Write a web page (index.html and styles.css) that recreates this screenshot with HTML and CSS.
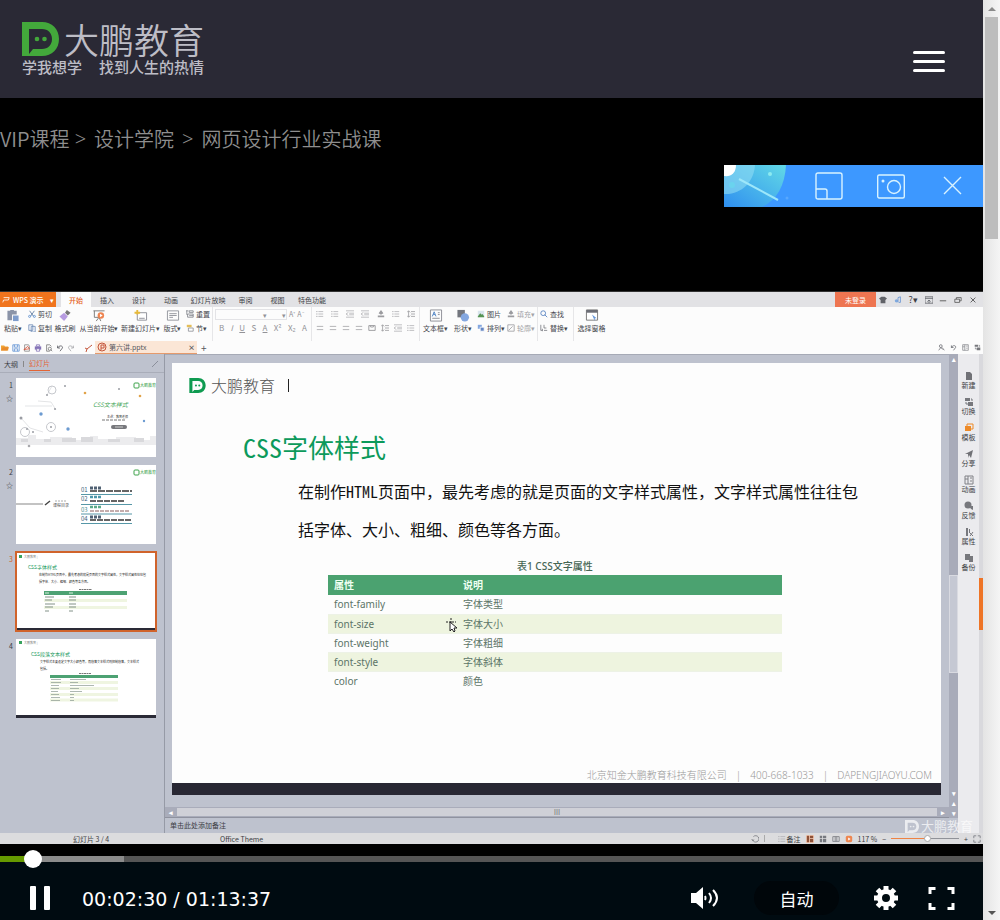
FILE: index.html
```html
<!DOCTYPE html>
<html lang="zh-CN">
<head>
<meta charset="utf-8">
<meta name="viewport" content="width=device-width, initial-scale=1">
<title>大鹏教育 - 网页设计行业实战课</title>
<link rel="stylesheet" href="styles.css">
</head>
<body>
<svg class="defs" aria-hidden="true">
  <symbol id="brand" viewBox="0 0 37 34"><path fill="currentColor" fill-rule="evenodd" d="M0 0H20C30 0 37 7 37 17S30 34 20 34H0ZM7 7V32L11 27H20C26 27 30 23 30 17S26 7 20 7Z"/><circle cx="15" cy="17" r="2.3" fill="currentColor"/><circle cx="22.500" cy="17" r="2.300" fill="currentColor"/></symbol>
  <symbol id="paste" viewBox="0 0 14 14"><path fill="#8b94a8" d="M1 2h3V1h4v1h3v4H6v6H1z"/><path fill="#7e9ccc" d="M7 7h6v6H7z"/></symbol>
  <symbol id="cut" viewBox="0 0 10 10"><path d="M2 1 7 8M8 1 3 8" stroke="#56749c" fill="none"/><circle cx="2" cy="8" r="1.300" fill="none" stroke="#5a8ed0"/><circle cx="8" cy="8" r="1.300" fill="none" stroke="#5a8ed0"/></symbol>
  <symbol id="copy" viewBox="0 0 10 10"><path d="M1 1h5v7H1zM4 3h5v7H4z" fill="#f5f8fd" stroke="#6d8ab5"/></symbol>
  <symbol id="brush" viewBox="0 0 14 14"><path d="m9 1 4 3-3 3-3-3z" fill="#777"/><path d="M6 4 10 8 6 13 1 8z" fill="#b79be0"/></symbol>
  <symbol id="play" viewBox="0 0 14 14"><path d="M1 2h12M2 2v7h5M7 9l-3 4M7 9l2 4" stroke="#777" fill="none"/><circle cx="9" cy="7" r="3.500" fill="#ee8450"/><path d="m8 5 3 2-3 2z" fill="#fff"/></symbol>
  <symbol id="newslide" viewBox="0 0 14 14"><path d="M3 4h10v8H3zM5 10h6" stroke="#8b8e96" fill="#fff"/><path d="M3 1v5M0 4h6" stroke="#e6b93b" stroke-width="2"/></symbol>
  <symbol id="layout" viewBox="0 0 14 14"><path d="M1 2h12v10H1zM3 5h8M3 7h8M3 9h4" stroke="#92959c" fill="none"/></symbol>
  <symbol id="reset" viewBox="0 0 10 10"><path d="M0 1h3M1 1v5M4 1h5v2H4zM2 5h7v4H2zM4 7h5" stroke="#7c7f86" fill="none"/></symbol>
  <symbol id="section" viewBox="0 0 10 10"><path d="M1 1h6v3H1z" fill="#e4be58"/><path d="M3 5h6v4H3z" stroke="#8a8d94" fill="#fff"/></symbol>
  <symbol id="lines" viewBox="0 0 10 10"><path d="M1 3h8M1 7h8" stroke="#a3a3a7" fill="none"/></symbol>
  <symbol id="bullets" viewBox="0 0 10 10"><path d="M0 2h2M0 5h2M0 8h2M3 2h6M3 5h6M3 8h6" stroke="#b1b1b5" fill="none"/></symbol>
  <symbol id="indent" viewBox="0 0 10 10"><path d="M0 1h10M4 4h6M4 6h6M0 9h10M3 3 0 5l3 2" stroke="#b1b1b5" fill="none"/></symbol>
  <symbol id="spacing" viewBox="0 0 10 10"><path d="M2 1v8M0 3l2-2 2 2M0 7l2 2 2-2M5 2h5M5 5h5M5 8h5" stroke="#9a9a9e" fill="none"/></symbol>
  <symbol id="columns" viewBox="0 0 10 10"><path d="M1 2h8v6H1zM5 2v3M3 2v2M7 2v2" stroke="#8d8d91" fill="none"/></symbol>
  <symbol id="textbox" viewBox="0 0 14 14"><path d="M1 1h12v12H1zM9 4h2M9 6h2M3 10h8" stroke="#8a8d94" fill="none"/><path d="m3 8 2-5 2 5M4 6h2" stroke="#4e83c4" fill="none"/></symbol>
  <symbol id="shapes" viewBox="0 0 14 14"><path d="M1 1h8v8H1z" fill="#73767e"/><circle cx="9" cy="9" r="4.500" fill="#84a7e0"/></symbol>
  <symbol id="picture" viewBox="0 0 10 10"><path d="M1 1h8v8H1z" fill="#d9e5ed"/><path d="m1 8 3-4 2 2 1-1 2 3v1H1z" fill="#569454"/></symbol>
  <symbol id="arrange" viewBox="0 0 10 10"><path d="M1 1h5v5H1z" fill="#84a7e0"/><path d="M4 4h5v5H4z" fill="#6586c3" stroke="#fff"/></symbol>
  <symbol id="fill" viewBox="0 0 10 10"><path d="m5 0 3 4-3 2-3-2zM1 7h8v2H1z" fill="#9b9b9f"/></symbol>
  <symbol id="outline" viewBox="0 0 10 10"><path d="M1 1h8v8H1zM2 8l5-5" stroke="#9b9b9f" fill="none"/></symbol>
  <symbol id="find" viewBox="0 0 10 10"><circle cx="4" cy="4" r="3" fill="none" stroke="#4979bd"/><path d="m6 6 3 3" stroke="#4979bd"/></symbol>
  <symbol id="person" viewBox="0 0 10 10"><circle cx="4" cy="3" r="2" fill="none" stroke="#606268"/><path d="m1 9 3-4 3 3M6 5l3 4" stroke="#606268" fill="none"/></symbol>
  <symbol id="replace" viewBox="0 0 10 10"><path d="M1 1v7h2M5 1v4h3M5 8h4M3 6v3" stroke="#77797f" fill="none"/></symbol>
  <symbol id="pane" viewBox="0 0 14 14"><path d="M1 1h12v11H1z" stroke="#777" fill="#fff"/><path d="M1 1h12v3H1z" fill="#6c6e76"/><path d="m7 6 5 4-2 0 0 3z" fill="#6496da"/></symbol>
  <symbol id="folder" viewBox="0 0 10 10"><path d="M0 2h4l1 1h4v5H0z" fill="#efa233"/><path d="m2 4h8l-2 4H0z" fill="#e88a2b"/></symbol>
  <symbol id="save" viewBox="0 0 10 10"><path d="M1 1h8v8H1zM3 1v3h4V1M3 9V6h4v3" stroke="#5f92d4" fill="none"/></symbol>
  <symbol id="pdf" viewBox="0 0 10 10"><path d="M2 9V1h5l1 2v6z" stroke="#888" fill="none"/><path d="m1 7 5-4 2 3z" stroke="#d65339" fill="none"/></symbol>
  <symbol id="print" viewBox="0 0 10 10"><path d="M1 3h8v4H1z" fill="#8473b7"/><path d="M3 1h4v2H3zM3 6h4v3H3z" stroke="#8473b7" fill="#fff"/></symbol>
  <symbol id="preview" viewBox="0 0 10 10"><path d="M6 9H2V1h4l2 2" stroke="#777" fill="none"/><circle cx="6" cy="6" r="2" stroke="#777" fill="none"/><path d="m7 7 2 2" stroke="#777"/></symbol>
  <symbol id="undo" viewBox="0 0 10 10"><path d="M2 2v3h3M2 5c2-4 7-3 6 0L5 9" stroke="#55575e" fill="none"/></symbol>
  <symbol id="redo" viewBox="0 0 10 10"><path d="M8 2v3H5M8 5C6 1 1 2 2 5l3 4" stroke="#a6a7ab" fill="none"/></symbol>
  <symbol id="doc" viewBox="0 0 10 10"><path d="M2 1h4l2 2v6H2z" fill="#707176"/></symbol>
  <symbol id="switch" viewBox="0 0 10 10"><path d="M1 1h5v3H1zM4 5h5v4H4z" fill="#77787d"/><path d="M2 5v2h2M7 2h1v2" stroke="#77787d" fill="none"/></symbol>
  <symbol id="template" viewBox="0 0 10 10"><path d="M3 1h6v5H3z" fill="none" stroke="#ee8a27"/><path d="M1 3h6v5H1z" fill="#ee8a27"/></symbol>
  <symbol id="share" viewBox="0 0 10 10"><path d="m9 1-2 8-2-3-1 3V5L1 5z" fill="#707176"/></symbol>
  <symbol id="anim" viewBox="0 0 10 10"><path d="M1 1h8v8H1zM1 4h3M4 1v8M6 3h2M6 6h2" stroke="#808186" fill="none"/></symbol>
  <symbol id="chat" viewBox="0 0 10 10"><circle cx="4" cy="4" r="3.500" fill="#77787d"/><path d="M5 5h4v4L7 8z" fill="#77787d"/></symbol>
  <symbol id="props" viewBox="0 0 10 10"><path d="M2 1h2v8H2zM5 2h1v4H5z" fill="#77787d"/><path d="m5 5 4 4M9 5 6 9" stroke="#77787d"/></symbol>
  <symbol id="backup" viewBox="0 0 10 10"><path d="M1 1h5v6H1zM6 3h3v6H5V8z" fill="#77787d"/></symbol>
</svg>

<div class="page">
  <div class="content">
    <header class="site-header">
      <a class="brand" href="#">
        <span class="brand-row"><svg class="brand-mark"><use href="#brand"/></svg><span class="brand-name">大鹏教育</span></span>
        <span class="brand-slogan"><span>学我想学</span><span>找到人生的热情</span></span>
      </a>
      <button class="menu" aria-label="菜单"><span></span><span></span><span></span></button>
    </header>

    <nav class="crumbs" aria-label="面包屑"><span class="crumb-first"><a href="#">VIP课程</a>&gt;</span><a href="#">设计学院</a><span>&gt;</span><a href="#">网页设计行业实战课</a></nav>

    <div class="recorder">
      <svg class="recorder-art" viewBox="0 0 66 42">
        <defs><linearGradient id="fan" x1="0" y1="1" x2="1" y2="0"><stop offset="0" stop-color="#2f8ff0"/><stop offset="1" stop-color="#62d9e6"/></linearGradient></defs>
        <path d="M0 0H62C61 20 53 35 38 42H0Z" fill="url(#fan)"/><path d="M0 0H31C30 17 17 30 0 29Z" fill="#8fdcf3" opacity=".6"/>
        <path d="M0 0H12C12 8 7 12 0 11Z" fill="#fff"/><path d="m15 14 39 21" stroke="#9de7fa" stroke-width="2"/><circle cx="8" cy="20" r="3" fill="#6ad3ee"/><circle cx="46" cy="9" r="2" fill="#8ceaf0"/><circle cx="63" cy="33" r="1.500" fill="#58a8ff"/>
      </svg>
      <button aria-label="窗口"><svg viewBox="0 0 28 28"><path d="M3 1H25Q27 1 27 3V25Q27 27 25 27H3Q1 27 1 25V3Q1 1 3 1ZM1 17H10Q12 17 12 19V27"/></svg></button>
      <button aria-label="截图"><svg viewBox="0 0 28 28"><rect x="0.700" y="3" width="26.600" height="23" rx="1.500"/><circle cx="17" cy="15" r="6.500"/><circle class="dot" cx="6" cy="9" r="1.500"/></svg></button>
      <button aria-label="关闭"><svg viewBox="0 0 28 28"><path d="m6 5 17 17M23 5 6 22"/></svg></button>
    </div>

    <section class="wps" aria-label="课程视频">
      <div class="titlebar">
        <button class="app"><svg viewBox="0 0 10 10"><path d="M2 2h7L8 5H2L1 8" stroke="#fff" fill="none"/></svg>WPS 演示<i>▾</i></button>
        <div class="tabs"><button class="active">开始</button><button>插入</button><button>设计</button><button>动画</button><button>幻灯片放映</button><button>审阅</button><button>视图</button><button>特色功能</button></div>
        <button class="login">未登录</button>
        <div class="winbtns">
          <svg viewBox="0 0 10 10"><path d="m0 3 3-2h4l3 2-2 2v4H2V5z" fill="#606268"/></svg>
          <svg viewBox="0 0 10 10"><circle cx="3" cy="6" r="2" fill="#7ea9df"/><path d="M5 8V2l3-1v7H6" stroke="#5f8fd0" fill="none"/></svg>
          <span class="help">?▾</span>
          <svg viewBox="0 0 10 10"><path d="M0 1h10v8H0zM0 3h10M5 9V5M3 7l2-2 2 2" stroke="#606268" fill="none"/></svg>
          <svg viewBox="0 0 10 10"><path d="M1 6h8" stroke="#444"/></svg>
          <svg viewBox="0 0 10 10"><path d="M1 4h6v4H1zM3 4V2h6v4H7" stroke="#555" fill="none"/></svg>
          <svg viewBox="0 0 10 10"><path d="m2 2 6 6M8 2 2 8" stroke="#444"/></svg>
        </div>
      </div>

      <div class="ribbon">
        <div class="big"><svg><use href="#paste"/></svg><span>粘贴▾</span></div>
        <div class="stack"><span><svg><use href="#cut"/></svg>剪切</span><span><svg><use href="#copy"/></svg>复制</span></div>
        <div class="big"><svg><use href="#brush"/></svg><span>格式刷</span></div>
        <div class="big"><svg><use href="#play"/></svg><span>从当前开始▾</span></div>
        <div class="big"><svg><use href="#newslide"/></svg><span>新建幻灯片▾</span></div>
        <div class="big"><svg><use href="#layout"/></svg><span>版式▾</span></div>
        <div class="stack"><span><svg><use href="#reset"/></svg>重置</span><span><svg><use href="#section"/></svg>节▾</span></div>
        <div class="stack ruled font-tools">
          <span><span class="fontbox"><i>▾</i><i>▾</i></span><b>A⁺</b><b>A⁻</b></span>
          <span class="letters"><b>B</b><em>I</em><u>U</u><b>S</b><u>A</u><b>X²</b><b>X₂</b><b>A</b></span>
        </div>
        <div class="stack ruled para-tools">
          <span><svg><use href="#bullets"/></svg><svg><use href="#bullets"/></svg><svg><use href="#indent"/></svg><svg><use href="#indent"/></svg><svg><use href="#fill"/></svg><svg><use href="#bullets"/></svg><svg><use href="#spacing"/></svg></span>
          <span><svg><use href="#lines"/></svg><svg><use href="#lines"/></svg><svg><use href="#lines"/></svg><svg><use href="#lines"/></svg><svg><use href="#columns"/></svg><svg><use href="#spacing"/></svg><svg><use href="#indent"/></svg><svg><use href="#bullets"/></svg></span>
        </div>
        <div class="big ruled"><svg><use href="#textbox"/></svg><span>文本框▾</span></div>
        <div class="big"><svg><use href="#shapes"/></svg><span>形状▾</span></div>
        <div class="stack"><span><svg><use href="#picture"/></svg>图片</span><span><svg><use href="#arrange"/></svg>排列▾</span></div>
        <div class="stack muted"><span><svg><use href="#fill"/></svg>填充▾</span><span><svg><use href="#outline"/></svg>轮廓▾</span></div>
        <div class="stack ruled"><span><svg><use href="#find"/></svg>查找</span><span><svg><use href="#replace"/></svg>替换▾</span></div>
        <div class="big ruled"><svg><use href="#pane"/></svg><span>选择窗格</span></div>
      </div>

      <div class="quickbar">
        <div class="quick"><svg><use href="#folder"/></svg><svg><use href="#save"/></svg><svg><use href="#pdf"/></svg><svg><use href="#print"/></svg><svg><use href="#preview"/></svg><svg><use href="#undo"/></svg><svg><use href="#redo"/></svg></div>
        <svg class="pin" viewBox="0 0 10 10"><path d="m2 5 2 1 5-4M3 9l1-3" stroke="#c4553a" fill="none"/></svg>
        <div class="filetab"><svg viewBox="0 0 10 10"><circle cx="5" cy="5" r="4" fill="none" stroke="#c4553a"/><path d="M4 8V3h3v3H4" fill="none" stroke="#c4553a"/></svg><span>第六讲.pptx</span><b>×</b></div>
        <span class="plus">+</span>
        <div class="tools"><svg><use href="#person"/></svg><svg><use href="#undo"/></svg><svg><use href="#anim"/></svg><svg><use href="#switch"/></svg></div>
      </div>

      <div class="workspace">
        <aside class="outline">
          <div class="outline-tabs"><span>大纲</span><i></i><span class="on">幻灯片</span><svg viewBox="0 0 8 8"><path d="m1 7 6-6" stroke="#8b8f9b"/></svg></div>
          <ol class="thumbs">
            <li><span class="num">1<small>☆</small></span>
              <svg viewBox="0 0 140 79"><rect width="140" height="79" fill="#fff"/>
                <g class="mini-brand"><rect x="118" y="5" width="5" height="5" rx="1" fill="none" stroke="#3da24b"/><text x="124" y="9">大鹏教育</text></g>
                <g fill="none" stroke="#c6c8cd"><path d="M9 28 36 28M22 23 35 24 40 32M5 40 14 50 27 54M31 17 36 8" stroke-width=".500"/><circle cx="36" cy="12" r="4"/><circle cx="35" cy="49" r="4.500"/><circle cx="9" cy="54" r="4.500"/></g>
                <g fill="#9a9ca3"><circle cx="31" cy="17" r="1"/><circle cx="49" cy="8" r="1"/><circle cx="39" cy="31" r="1"/><circle cx="5" cy="40" r="1.500"/><circle cx="11" cy="51" r="1"/><circle cx="17" cy="54" r="1"/><circle cx="35" cy="49" r="1"/><circle cx="103" cy="11" r="1"/></g>
                <g fill="#6c9bd1"><circle cx="25" cy="36" r="1.700"/><circle cx="52" cy="51" r="1.700"/><circle cx="128" cy="43" r="1.200"/></g><g fill="#e1a34a"><circle cx="69" cy="15" r="1.300"/><circle cx="124" cy="18" r="1.300"/></g>
                <path d="M0 60h12v-3h8v4h14v-2h22v3h18v-4h8v3h18v-2h20v3h14v-4h6v9H0z" fill="#ececee"/><path d="M5 61h7v3H5zM28 61h7v3h-7zM46 60h14v4H46zM65 59h12v5H65zM92 61h12v3H92zM118 60h10v4h-10z" fill="#d9d9dc"/><circle cx="13" cy="68" r="1.300" fill="#a9a9ad"/>
                <text x="77" y="29" font-size="6" fill="#47a658" font-style="italic">CSS文本样式</text><text x="91" y="40" font-size="3" fill="#333">主讲：教育老师</text><path d="M86 42h24" stroke="#777" stroke-dasharray="3 1"/>
                <rect x="95" y="47" width="16" height="4" rx="2" fill="#77787c"/><path d="M99 49h8" stroke="#ccc"/>
              </svg></li>
            <li><span class="num">2<small>☆</small></span>
              <svg viewBox="0 0 140 79"><rect width="140" height="79" fill="#fff"/>
                <g class="mini-brand"><rect x="118" y="5" width="5" height="5" rx="1" fill="none" stroke="#3da24b"/><text x="124" y="9">大鹏教育</text></g>
                <path d="M0 39h27" stroke="#555" stroke-width=".700"/><path d="m29 40 5-4" stroke="#444" stroke-width="1.500"/><path d="M39 36h12" stroke="#aaa" stroke-dasharray="2 1"/><text x="37" y="42" font-size="4" fill="#555">课程目录</text>
                <g font-size="6" fill="#395b79"><text x="65" y="27">01</text><text x="65" y="36">02</text><text x="65" y="47" fill="#448a8e">03</text><text x="65" y="56">04</text></g>
                <g stroke="#506173"><path d="M74 23h12" stroke-width="3" stroke-dasharray="3 1"/><path d="M74 26h42" stroke="#333" stroke-width="1.500" stroke-dasharray="7 1"/><path d="M74 32h12" stroke="#4e98ab" stroke-width="2.500" stroke-dasharray="3 1"/><path d="M74 36h34" stroke="#333" stroke-width="1.500" stroke-dasharray="6 1"/><path d="M74 42h12" stroke="#5bab89" stroke-width="2.500" stroke-dasharray="3 1"/><path d="M74 46h39" stroke="#8a5d5d" stroke-dasharray="4 1"/><path d="M74 52h12" stroke-width="3" stroke-dasharray="3 1"/><path d="M74 55h42" stroke="#333" stroke-width="1.500" stroke-dasharray="6 1"/></g>
                <path d="M65 29.500h51M65 39.500h51M65 49h51M65 58.500h51" stroke="#438b9d" stroke-width=".900"/>
              </svg></li>
            <li class="current"><span class="num">3</span>
              <svg viewBox="0 0 140 79"><rect width="140" height="79" fill="#fff"/><rect y="76" width="140" height="3" fill="#2a2a36"/>
                <rect x="3" y="3" width="3" height="3" fill="#37a25d"/><text x="8" y="6" font-size="3" fill="#888">大鹏教育 |</text><text x="12" y="17" font-size="5" fill="#16985b">CSS字体样式</text>
                <g font-size="3" fill="#222"><text x="23" y="24">在制作HTML页面中，最先考虑的就是页面的文字样式属性，文字样式属性往往包</text><text x="23" y="31">括字体、大小、粗细、颜色等各方面。</text></g>
                <path d="M63 37.500h13" stroke="#777" stroke-dasharray="2 .500"/><rect x="28" y="39" width="83" height="4" fill="#4da273"/><path d="M28 48.500h83M28 55.500h83" stroke="#eff5e1" stroke-width="3"/><path d="M29 45h9M29 48h7M29 52h10M29 55h8M29 59h4M53 45h7M53 48h7M53 52h7M53 55h7M53 59h4" stroke="#839289"/><path d="M29 41h4M53 41h4" stroke="#d8eedf"/>
              </svg></li>
            <li><span class="num">4</span>
              <svg viewBox="0 0 140 79"><rect width="140" height="79" fill="#fff"/><rect y="76" width="140" height="3" fill="#2a2a36"/>
                <rect x="3" y="2" width="3" height="3" fill="#37a25d"/><text x="8" y="5" font-size="3" fill="#888">大鹏教育 |</text><text x="15" y="17" font-size="5" fill="#16985b">CSS段落文本样式</text>
                <g font-size="3" fill="#222"><text x="24" y="24">文字样式主要设定文字大小颜色等，而段落文本样式则控制段落，文本样式</text><text x="24" y="31">包括。</text></g>
                <path d="M63 34.500h12" stroke="#777" stroke-dasharray="2 .500"/><rect x="34" y="36" width="68" height="3" fill="#4da273"/><path d="M34 43.500h68M34 49.500h68M34 55.500h68M34 61h68" stroke="#eff5e1" stroke-width="3"/><path d="M35 40.500h10M35 43.500h10M35 46.500h8M35 49.500h8M35 52.500h7M35 55.500h8M35 58.500h9M35 61.500h9M54 40.500h16M54 43.500h8M54 46.500h24M54 49.500h9M54 52.500h12M54 55.500h4M54 58.500h4M54 61.500h4" stroke="#8b9991" stroke-width=".700"/>
              </svg></li>
          </ol>
        </aside>

        <div class="center">
          <div class="view">
            <div class="stage-col">
              <div class="stage">
                <article class="slide">
                  <div class="slide-brand"><svg><use href="#brand"/></svg><span>大鹏教育</span><i></i></div>
                  <h1><span class="latin">CSS</span>字体样式</h1>
                  <p>在制作<span class="latin">HTML</span>页面中，最先考虑的就是页面的文字样式属性，文字样式属性往往包<br>括字体、大小、粗细、颜色等各方面。</p>
                  <table>
                    <caption>表1 CSS文字属性</caption>
                    <thead><tr><th scope="col">属性</th><th scope="col">说明</th></tr></thead>
                    <tbody>
                      <tr><td>font-family</td><td>字体类型</td></tr>
                      <tr><td>font-size</td><td><svg class="pointer" viewBox="0 0 12 16"><path d="M5 1v10M0 5h10" stroke="#222" stroke-dasharray="2 1"/><path d="M4 5v9l2-2 2 3 1-1-1-3h3z" fill="#fff" stroke="#222"/></svg>字体大小</td></tr>
                      <tr><td>font-weight</td><td>字体粗细</td></tr>
                      <tr><td>font-style</td><td>字体斜体</td></tr>
                      <tr><td>color</td><td>颜色</td></tr>
                    </tbody>
                  </table>
                  <footer><span>北京知金大鹏教育科技有限公司</span><span>|</span><span>400-668-1033</span><span>|</span><span>DAPENGJIAOYU.COM</span></footer>
                </article>
              </div>
              <div class="hscroll"><b>◂</b><span>Ⅲ</span><b>▸</b></div>
            </div>
            <div class="vscroll"><b>▴</b><span></span><b>▾</b><b>▴</b><b>▾</b></div>
          </div>
          <div class="notes">单击此处添加备注</div>
        </div>

        <div class="taskpane">
          <button><svg><use href="#doc"/></svg>新建</button><button><svg><use href="#switch"/></svg>切换</button><button><svg><use href="#template"/></svg>模板</button><button><svg><use href="#share"/></svg>分享</button><button><svg><use href="#anim"/></svg>动画</button><button><svg><use href="#chat"/></svg>反馈</button><button><svg><use href="#props"/></svg>属性</button><button><svg><use href="#backup"/></svg>备份</button>
        </div>
        <div class="edge"><span></span></div>
      </div>

      <div class="status">
        <span class="page-no">幻灯片 3 / 4</span><span class="theme">Office Theme</span>
        <svg viewBox="0 0 10 10"><path d="M3 2a4 4 0 1 1-1 4M1 5l1 2 2-1" stroke="#77797f" fill="none"/></svg><i></i>
        <span class="note-btn"><svg><use href="#bullets"/></svg>备注</span>
        <svg class="lit" viewBox="0 0 10 10"><path d="M1 1h3v8H1zM5 1h4v3H5zM5 5h4v4H5z" fill="#8d5037"/></svg>
        <svg viewBox="0 0 10 10"><path d="M1 1h3v3H1zM5 1h4v3H5zM1 5h3v4H1zM5 5h4v4H5z" fill="#77797f"/></svg>
        <svg viewBox="0 0 10 10"><path d="M1 2h8v6H1zM4 2v6M6 2v6" stroke="#77797f" fill="none"/></svg>
        <svg viewBox="0 0 10 10"><rect x="1" y="1" width="8" height="8" rx="2" fill="#ee8650"/><path d="m4 3 3 2-3 2z" fill="#fff"/></svg>
        <span class="zoom">117 %</span><span>−</span><span class="slider"><b></b></span><span>+</span>
        <svg viewBox="0 0 10 10"><path d="M1 4V1h3M6 1h3v3M9 6v3H6M4 9H1V6" stroke="#77797f" fill="none"/></svg>
      </div>
      <div class="watermark"><svg><use href="#brand"/></svg>大鹏教育</div>
    </section>

    <section class="player" aria-label="播放控制">
      <input class="progress" type="range" min="0" max="983" value="24" aria-label="播放进度">
      <div class="controls">
        <button aria-label="暂停"><svg class="pause" viewBox="0 0 20 24"><rect width="6" height="24" rx="1"/><rect x="14" width="6" height="24" rx="1"/></svg></button>
        <span class="time">00:02:30 / 01:13:37</span>
        <button class="volume" aria-label="音量"><svg viewBox="0 0 28 24"><path d="M0 7h5l7-6v22l-7-6H0z"/><path class="wave" d="M14 10q1 2 0 4M18 7q4 5 0 10M22 4q8 8 0 16"/></svg></button>
        <button class="quality">自动</button>
        <button aria-label="设置"><svg class="gear" viewBox="0 0 24 24"><circle cx="12" cy="12" r="6.500"/><path d="M12 0v5M12 19v5M0 12h5M19 12h5M3.500 3.500 7 7M17 17l3.500 3.500M20.500 3.500 17 7M7 17l-3.500 3.500"/></svg></button>
        <button aria-label="全屏"><svg class="full" viewBox="0 0 26 23"><path d="M1.500 7V1.500H7M19 1.500h5.500V7M24.500 16v5.500H19M7 21.500H1.500V16"/></svg></button>
      </div>
    </section>
  </div>

  <div class="scrollbar" aria-hidden="true"><svg viewBox="0 0 8 4"><path d="m0 4 4-4 4 4z" fill="#8a8a8a"/></svg><span></span><svg viewBox="0 0 8 4"><path d="m0 0 4 4 4-4z" fill="#555"/></svg></div>
</div>
</body>
</html>
```
FILE: styles.css
```css
* { box-sizing: border-box; }
body { margin: 0; background: #000; font-family: "Noto Sans CJK SC", sans-serif; }
button { font: inherit; color: inherit; background: none; border: 0; padding: 0; margin: 0; white-space: nowrap; }
a { color: inherit; text-decoration: none; }
svg { display: block; flex: none; }
i { font-style: normal; }
.defs { position: absolute; width: 0; height: 0; }
.page { display: flex; min-height: 100vh; }
.content { flex: 1; min-width: 0; display: flex; flex-direction: column; }

.site-header { display: flex; justify-content: space-between; align-items: flex-start; height: 98px; padding: 22px 38px 0 22px; background: #2a2935; }
.brand { color: #bdbdc6; }
.brand-row { display: flex; align-items: center; gap: 5px; height: 34px; }
.brand-mark { width: 37px; height: 34px; color: #43a83b; }
.brand-name { font-size: 35px; line-height: 34px; font-weight: 350; }
.brand-slogan { display: flex; gap: 17px; margin-top: 2px; font-size: 15px; line-height: 18px; font-weight: 500; }
.menu { display: grid; gap: 6px; width: 32px; margin-top: 29px; }
.menu span { height: 3px; border-radius: 2px; background: #fff; }

.crumbs { display: flex; gap: 8px; height: 67px; padding-top: 26px; font: 350 20px/30px "Noto Sans", "Noto Sans CJK SC", sans-serif; color: #8e8e8e; }
.crumbs a { font-family: "Noto Sans CJK SC", sans-serif; }
.crumb-first { display: flex; gap: 5px; }

.recorder { display: flex; align-items: center; align-self: flex-end; width: 259px; height: 42px; margin-bottom: 84px; background: #3d98ff; }
.recorder-art { width: 66px; height: 42px; margin-right: 8px; }
.recorder button { display: grid; place-items: center; flex: 1; }
.recorder button svg { width: 28px; height: 28px; fill: none; stroke: #d9f3ff; stroke-width: 1.4; }
.recorder .dot { fill: #d9f3ff; stroke: none; }

.wps { position: relative; background: #fcfcfc; color: #3c3e44; font-size: 7px; line-height: 10px; border-top: 1px solid #333; }
.wps svg { width: 10px; height: 10px; }
.titlebar { display: flex; height: 15px; background: #e2e2e5; }
.app { display: flex; align-items: center; gap: 3px; width: 56px; padding-left: 2px; margin-right: 5px; background: #f0741d; color: #fff; font-weight: 500; }
.app svg { width: 8px; }
.app i { margin-left: auto; padding-right: 2px; }
.tabs { display: grid; grid-template-columns: 30px 32px 32px 32px 42px 33px 31px 38px; }
.tabs .active { background: #fcfcfc; color: #e56122; font-weight: 500; }
.login { width: 41px; margin-left: auto; background: #ee7551; color: #fff; }
.winbtns { display: flex; align-items: center; justify-content: space-between; width: 107px; padding: 0 6px 0 3px; }
.winbtns svg { width: 8px; height: 8px; }
.help { font-size: 9px; }

.ribbon { display: grid; grid-template-columns: 26px 26px 26px 42px 41px 23px 28px 99px 108px 32px 24px 30px 32px 36px 36px; height: 34px; color: #44464c; }
.ribbon > div { display: flex; flex-direction: column; white-space: nowrap; padding-top: 2px; }
.big { align-items: center; gap: 1px; }
.ribbon .big svg { width: 14px; height: 13px; }
.stack { gap: 4px; padding-left: 2px; }
.stack > span { display: flex; align-items: center; gap: 2px; height: 10px; }
.ribbon .stack svg { width: 8px; height: 8px; }
.ruled { border-left: 1px solid #e6e6e8; }
.muted { color: #a3a3a7; }
.font-tools, .para-tools { color: #929297; }
.ribbon .stack .fontbox { display: flex; justify-content: flex-end; gap: 15px; width: 72px; height: 11px; border: 1px solid #e3e3e6; }
.stack b { font-weight: 400; }
.stack .letters { justify-content: space-between; padding: 0 4px; font-size: 8px; }
.para-tools > span { justify-content: space-between; padding: 0 4px 0 2px; }

.quickbar { display: flex; align-items: center; height: 13px; color: #55575e; }
.quick { display: flex; gap: 3px; padding-left: 1px; }
.quickbar .quick svg { width: 8px; height: 8px; }
.pin { margin: 0 2px 0 8px; }
.filetab { display: flex; align-items: center; gap: 2px; width: 102px; height: 13px; padding: 0 2px; background: #fbe6d6; border-bottom: 1px solid #e59a6c; }
.filetab b { margin-left: auto; }
.plus { padding-left: 4px; font-size: 10px; }
.tools { display: flex; gap: 5px; margin-left: auto; padding-right: 2px; }
.quickbar .tools svg { width: 7px; height: 7px; }

.workspace { display: flex; min-height: 479px; background: #bec2ce; }
.outline { width: 165px; border-right: 1px solid #969aa6; }
.outline-tabs { display: flex; align-items: center; gap: 5px; height: 18px; padding: 2px 5px 0 4px; }
.outline-tabs i { width: 1px; height: 6px; background: #888; }
.outline-tabs .on { height: 14px; line-height: 12px; color: #e26536; border-bottom: 1px solid #e26536; }
.wps .outline-tabs svg { width: 8px; height: 8px; margin-left: auto; }
.thumbs { display: grid; gap: 8px; margin: 0; padding: 5px 8px 0 0; border-top: 1px solid #a9adb9; list-style: none; }
.thumbs li { display: flex; }
.num { display: flex; flex-direction: column; gap: 3px; width: 16px; padding: 2px 3px 0 0; text-align: right; }
.thumbs small { font-size: 7px; line-height: 10px; }
.wps .thumbs svg { flex: 1; height: auto; }
.thumbs .current svg { outline: 2px solid #d0632b; outline-offset: -1px; }
.current .num { color: #d0632b; }
.mini-brand { font-size: 4px; fill: #3da24b; }

.center { display: flex; flex-direction: column; flex: 1; min-width: 0; }
.view { display: flex; flex: 1; }
.stage-col { display: flex; flex-direction: column; flex: 1; }
.stage { display: flex; flex: 1; padding: 8px 8px 12px 7px; border-top: 1px solid #a6aab6; }
.slide { display: flex; flex-direction: column; flex: 1; padding-top: 12px; background: #fdfdfd; border-bottom: 12px solid #282733; }
.slide-brand { display: flex; align-items: center; height: 20px; padding-left: 17px; font-size: 16px; font-weight: 300; color: #555; }
.wps .slide-brand svg { width: 17px; height: 15px; margin-right: 5px; color: #0f9b51; }
.slide-brand i { width: 1px; height: 13px; margin-left: 13px; background: #222; }
.latin { font-family: "Noto Sans Mono CJK SC", "Liberation Mono", monospace; }
.slide h1 { margin: 35px 0 0 71px; font-size: 26px; line-height: 34px; font-weight: 400; color: #0c9a5b; }
.slide p { margin: 8px 0 0 126px; font-size: 16px; line-height: 38px; color: #111; white-space: nowrap; }
.slide table { width: 59%; margin: 9px 0 0 156px; border-collapse: collapse; table-layout: fixed; font: 10px/18px "Noto Sans", "Noto Sans CJK SC", sans-serif; color: #5c7468; }
.slide caption { height: 18px; font-weight: 500; color: #456554; }
.slide th, .slide td { position: relative; height: 19px; padding: 0 6px; text-align: left; }
.slide th { height: 20px; background: #4ba270; color: #effff2; }
.slide th:first-child { width: 129px; }
.slide tbody tr:nth-child(even) { background: #eef4df; }
.slide td { border-bottom: 1px solid #edf2e6; }
.slide tr:last-child td { border: 0; }
.wps .pointer { position: absolute; left: -11px; top: 2px; width: 12px; height: 16px; }
.slide footer { display: flex; justify-content: flex-end; gap: 9px; margin-top: auto; padding: 0 9px 1px 0; font: 300 10px/14px "Noto Sans", "Noto Sans CJK SC", sans-serif; color: #999; }
.hscroll { display: flex; justify-content: space-between; height: 11px; background: #a9acba; color: #fff; line-height: 11px; border-bottom: 1px solid #8f929f; }
.hscroll b { width: 12px; text-align: center; }
.hscroll span { flex: 1; margin: 1px 0; background: #cfd0d7; color: #777; text-align: center; line-height: 9px; }
.vscroll { display: flex; flex-direction: column; width: 9px; background: #a8abb9; color: #fff; text-align: center; }
.vscroll span { height: 98px; margin: 211px 0 auto; background: #c5c8d3; border: 1px solid #d9dae1; }
.notes { height: 15px; padding: 2px 5px; }

.taskpane { display: grid; grid-auto-rows: 26px; width: 21px; padding-top: 17px; background: #ebebee; }
.taskpane button { display: flex; flex-direction: column; align-items: center; font-size: 7px; line-height: 8px; }
.edge { width: 4px; background: #d9d9dd; }
.edge span { display: block; height: 52px; margin-top: 224px; background: #ee7426; }

.status { display: flex; align-items: center; gap: 5px; height: 11px; padding-right: 2px; background: #dcdcde; }
.status i { width: 1px; height: 7px; margin-right: 8px; background: #aaa; }
.wps .status svg { width: 8px; height: 8px; }
.page-no { width: 142px; padding-left: 73px; white-space: nowrap; }
.theme { margin: 0 auto 0 73px; }
.note-btn { display: flex; align-items: center; gap: 1px; }
.lit { background: #f5ccb6; }
.status .slider { position: relative; width: 68px; height: 1px; background: linear-gradient(90deg, #ee8344 52%, #909298 52%); }
.slider b { position: absolute; left: 33px; top: -3px; width: 7px; height: 7px; border-radius: 50%; background: #fff; border: 1px solid #aaa; }
.watermark { position: absolute; right: 10px; bottom: 11px; display: flex; align-items: center; gap: 2px; height: 14px; font-size: 13px; line-height: 14px; color: #fff; opacity: .7; }
.wps .watermark svg { width: 14px; height: 13px; }

.player { flex: 1; background: linear-gradient(#000 12px, #000b11 12px); color: #fff; }
.progress { -webkit-appearance: none; appearance: none; display: block; width: 100%; height: 18px; margin: 6px 0 0; background: linear-gradient(90deg, #669900 28px, #8b8b8b 28px, #8b8b8b 124px, #555 124px) center / 100% 6px no-repeat; }
.progress::-webkit-slider-thumb { -webkit-appearance: none; width: 18px; height: 18px; border-radius: 50%; background: #fff; }
.controls { display: flex; align-items: center; height: 52px; padding: 8px 28px 0 30px; }
.controls svg { fill: #fff; }
.pause { width: 20px; height: 24px; }
.time { margin: 0 auto 0 32px; padding-top: 2px; font: 19px/24px "DejaVu Sans", sans-serif; }
.volume svg { width: 28px; height: 24px; }
.controls .wave, .controls .full { fill: none; stroke: #fff; stroke-width: 2; }
.controls .full { stroke-width: 3; width: 27px; height: 23px; }
.quality { width: 85px; height: 34px; margin: 0 35px; border-radius: 17px; background: #00060a; font-size: 17px; }
.controls .gear { width: 24px; height: 24px; margin-right: 30px; fill: none; stroke: #fff; stroke-width: 5; }

.scrollbar { display: flex; flex-direction: column; align-items: center; width: 17px; padding: 7px 0 5px; background: linear-gradient(90deg, #e4e4e4, #f5f5f5); }
.scrollbar svg { width: 8px; height: 4px; }
.scrollbar span { width: 13px; height: 222px; margin: 6px 0 auto; background: #bdbdbd; }
```
